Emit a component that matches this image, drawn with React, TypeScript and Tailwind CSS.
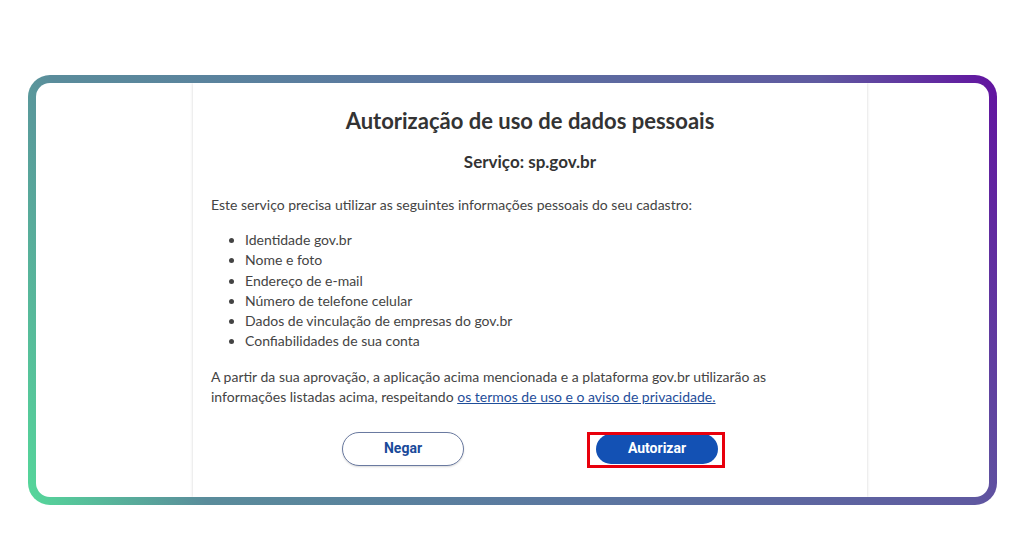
import React from "react";

const items = [
  "Identidade gov.br",
  "Nome e foto",
  "Endereço de e-mail",
  "Número de telefone celular",
  "Dados de vinculação de empresas do gov.br",
  "Confiabilidades de sua conta",
];

export default function App() {
  return (
    <div className="w-[1024px] h-[536px] bg-white pt-[75px] pl-[28px] font-['Lato','Open_Sans',sans-serif]">
      <div className="w-[969px] h-[430px] rounded-[22px] p-[8px] bg-[linear-gradient(70deg,#55d89a_0%,#5a8c9b_16%,#5b76a0_50%,#5f5aa0_84%,#6212a0_100%)]">
        <div className="w-full h-full bg-white rounded-[14px] overflow-hidden">
          <div className="ml-[157px] w-[674px] h-full bg-white shadow-[0_0_3px_rgba(0,0,0,0.18)] px-[18px] pt-[25px] text-[#333]">
            <h1 className="text-center text-[22px] font-bold text-[#333] leading-[26px]">
              Autorização de uso de dados pessoais
            </h1>
            <p className="text-center text-[17px] font-bold mt-[18px] leading-[20px]">Serviço: sp.gov.br</p>
            <p className="text-[14px] mt-[23px] leading-[20px] text-[#444]">
              Este serviço precisa utilizar as seguintes informações pessoais do seu cadastro:
            </p>
            <ul className="mt-[15px] pl-[34px] list-disc text-[14px] leading-[20.3px] text-[#444]">
              {items.map((t) => (
                <li key={t}>{t}</li>
              ))}
            </ul>
            <p className="text-[14px] mt-[15px] leading-[20px] text-[#444]">
              A partir da sua aprovação, a aplicação acima mencionada e a plataforma gov.br utilizarão as
              <br />
              informações listadas acima, respeitando{" "}
              <a className="text-[#1f4e9a] underline">os termos de uso e o aviso de privacidade.</a>
            </p>
            <div className="mt-[25px] flex justify-center gap-[132px] font-['Roboto','Liberation_Sans',sans-serif]">
              <button className="w-[122px] h-[34px] rounded-full border border-[#6a7aa0] bg-white text-[#1a4a9a] text-[14px] font-bold shadow-[0_1px_2px_rgba(0,0,0,0.15)]">
                Negar
              </button>
              <div className="relative mt-[2px]">
                <button className="w-[122px] h-[30px] rounded-full bg-[#1351b4] text-white text-[14px] font-bold">
                  Autorizar
                </button>
                <div className="absolute left-[-9px] right-[-7px] top-[-2px] bottom-[-2px] border-[3px] border-[#e8000c]" />
              </div>
            </div>
          </div>
        </div>
      </div>
    </div>
  );
}
